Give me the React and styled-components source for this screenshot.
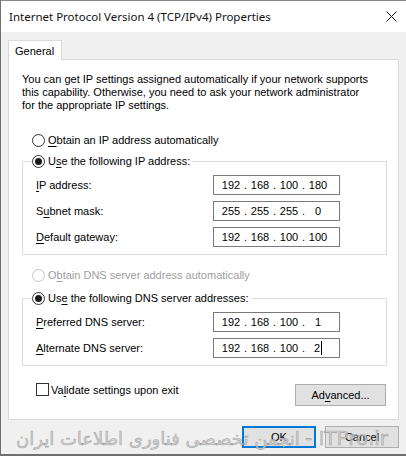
import React from 'react';
import styled, { createGlobalStyle } from 'styled-components';

const Global = createGlobalStyle`
  html, body { margin: 0; padding: 0; background: #f0f0f0; }
  body {
    font-family: "Liberation Sans", Arial, sans-serif;
    font-size: 11px;
    color: #000;
  }
  * { box-sizing: border-box; }
`;

const Window = styled.div`
  position: relative;
  width: 406px;
  height: 456px;
  border-left: 1px solid #6f6f6f;
  border-top: 1px solid #8a8a8a;
  border-bottom: 2px solid #6f6f6f;
  display: flex;
  flex-direction: column;
  background: #f0f0f0;
  overflow: hidden;
`;

const TitleBar = styled.div`
  height: 31px;
  flex-shrink: 0;
  background: #fff;
  display: flex;
  align-items: center;
  justify-content: space-between;
  padding: 0 9px 0 8px;
`;

const Title = styled.span`
  font-family: "Noto Sans", "Open Sans", sans-serif;
  font-size: 11.5px;
  white-space: nowrap;
  color: #111;
`;

const Body = styled.div`
  flex: 1;
  display: flex;
  flex-direction: column;
  padding: 8px 7px 0 7px;
`;

const TabStrip = styled.div`
  display: flex;
`;

const Tab = styled.div`
  height: 20px;
  width: 54px;
  background: #fff;
  border: 1px solid #d9d9d9;
  border-bottom: none;
  margin-bottom: -1px;
  padding-left: 6px;
  display: flex;
  align-items: center;
  position: relative;
  z-index: 1;
`;

const Panel = styled.div`
  height: 361px;
  background: #fff;
  border: 1px solid #d9d9d9;
  display: flex;
  flex-direction: column;
`;

const Intro = styled.p`
  margin: 13px 0 0 13px;
  line-height: 13px;
  white-space: nowrap;
`;

const RadioRow = styled.label`
  display: flex;
  align-items: center;
  height: 16px;
  margin: ${p => p.$mt || 0}px 0 0 23px;
  color: ${p => (p.$disabled ? '#a0a0a0' : '#000')};
  white-space: nowrap;
`;

const Circle = styled.span`
  width: 13px;
  height: 13px;
  border-radius: 50%;
  border: 1px solid ${p => (p.$disabled ? '#c4c4c4' : '#333')};
  background: #fff;
  display: flex;
  align-items: center;
  justify-content: center;
  margin-right: 3px;
  flex-shrink: 0;
  &::after {
    content: '';
    display: ${p => (p.$checked ? 'block' : 'none')};
    width: 7px;
    height: 7px;
    border-radius: 50%;
    background: #1a1a1a;
  }
`;

const Key = styled.u`
  text-decoration: underline;
  text-underline-offset: 2px;
`;

const Group = styled.fieldset`
  margin: ${p => p.$mt}px 11px 0 13px;
  padding: 0;
  border: 1px solid #dcdcdc;
  min-width: 0;
`;

const Legend = styled.legend`
  margin-left: 8px;
  padding: 0 2px 0 1px;
  height: 16px;
  display: flex;
  align-items: center;
  white-space: nowrap;
`;

const Rows = styled.div`
  display: flex;
  flex-direction: column;
  gap: 6px;
  padding: 6px 0 7px 13px;
`;

const FieldRow = styled.div`
  display: grid;
  grid-template-columns: 177px 127px;
  align-items: center;
  height: 20px;
`;

const IpBox = styled.div`
  width: 127px;
  height: 20px;
  border: 1px solid #7a7a7a;
  background: #fff;
  display: flex;
  align-items: center;
  padding-left: 6px;
`;

const Octet = styled.span`
  width: 22px;
  display: flex;
  justify-content: center;
  align-items: center;
`;

const Dot = styled.span`
  width: 7px;
  text-align: center;
`;

const Caret = styled.span`
  display: inline-block;
  width: 1px;
  height: 14px;
  background: #000;
  margin-left: 1px;
`;

const BottomRow = styled.div`
  display: flex;
  justify-content: space-between;
  align-items: flex-start;
  margin: 18px 12px 0 27px;
`;

const CheckLabel = styled.label`
  display: flex;
  align-items: center;
  margin-top: -1px;
  white-space: nowrap;
`;

const Box = styled.span`
  width: 13px;
  height: 13px;
  border: 1px solid #333;
  background: #fff;
  margin-right: 2px;
`;

const Button = styled.div`
  width: ${p => p.$w}px;
  height: 22px;
  background: #e1e1e1;
  border: ${p => (p.$default ? '2px solid #0078d7' : '1px solid #adadad')};
  display: flex;
  align-items: center;
  justify-content: center;
  white-space: nowrap;
`;

const Buttons = styled.div`
  display: flex;
  justify-content: flex-end;
  gap: 9px;
  margin-top: 6px;
`;

const Watermark = styled.div`
  position: absolute;
  left: 15px;
  top: 424px;
  height: 26px;
  display: flex;
  align-items: center;
  gap: 5px;
  white-space: nowrap;
  pointer-events: none;
  color: rgba(205, 205, 205, 0.85);
  -webkit-text-stroke: 0.6px rgba(120, 120, 120, 0.55);
`;

const WmFa = styled.span`
  font-family: "DejaVu Sans", sans-serif;
  font-size: 18px;
  direction: rtl;
  unicode-bidi: isolate;
`;

const WmEn = styled.span`
  font-family: "DejaVu Sans", sans-serif;
  font-size: 20px;
`;

const Ip = ({ parts, caret }) => (
  <IpBox>
    {parts.map((p, i) => (
      <React.Fragment key={i}>
        {i > 0 && <Dot>.</Dot>}
        <Octet>
          {p}
          {caret && i === 3 && <Caret />}
        </Octet>
      </React.Fragment>
    ))}
  </IpBox>
);

const CloseIcon = () => (
  <svg width="11" height="11" viewBox="0 0 11 11">
    <path d="M0.5 0.5 L10.5 10.5 M10.5 0.5 L0.5 10.5" stroke="#111" strokeWidth="1" fill="none" />
  </svg>
);

export default function App() {
  return (
    <>
      <Global />
      <Window>
        <TitleBar>
          <Title>Internet Protocol Version 4 (TCP/IPv4) Properties</Title>
          <CloseIcon />
        </TitleBar>
        <Body>
          <TabStrip>
            <Tab>General</Tab>
          </TabStrip>
          <Panel>
            <Intro>
              You can get IP settings assigned automatically if your network supports<br />
              this capability. Otherwise, you need to ask your network administrator<br />
              for the appropriate IP settings.
            </Intro>
            <RadioRow $mt={20}>
              <Circle />
              <span><Key>O</Key>btain an IP address automatically</span>
            </RadioRow>
            <Group $mt={5}>
              <Legend>
                <Circle $checked />
                <span>U<Key>s</Key>e the following IP address:</span>
              </Legend>
              <Rows>
                <FieldRow>
                  <span><Key>I</Key>P address:</span>
                  <Ip parts={['192', '168', '100', '180']} />
                </FieldRow>
                <FieldRow>
                  <span>S<Key>u</Key>bnet mask:</span>
                  <Ip parts={['255', '255', '255', '0']} />
                </FieldRow>
                <FieldRow>
                  <span><Key>D</Key>efault gateway:</span>
                  <Ip parts={['192', '168', '100', '100']} />
                </FieldRow>
              </Rows>
            </Group>
            <RadioRow $mt={12} $disabled>
              <Circle $disabled />
              <span>O<Key>b</Key>tain DNS server address automatically</span>
            </RadioRow>
            <Group $mt={7}>
              <Legend>
                <Circle $checked />
                <span>Us<Key>e</Key> the following DNS server addresses:</span>
              </Legend>
              <Rows>
                <FieldRow>
                  <span><Key>P</Key>referred DNS server:</span>
                  <Ip parts={['192', '168', '100', '1']} />
                </FieldRow>
                <FieldRow>
                  <span><Key>A</Key>lternate DNS server:</span>
                  <Ip parts={['192', '168', '100', '2']} caret />
                </FieldRow>
              </Rows>
            </Group>
            <BottomRow>
              <CheckLabel>
                <Box />
                <span>Va<Key>l</Key>idate settings upon exit</span>
              </CheckLabel>
              <Button $w={91}>Ad<Key>v</Key>anced...</Button>
            </BottomRow>
          </Panel>
          <Buttons>
            <Button $w={74} $default>OK</Button>
            <Button $w={74}>Cancel</Button>
          </Buttons>
        </Body>
        <Watermark>
          <WmFa>انجمن تخصصی فناوری اطلاعات ایران</WmFa>
          <WmEn>- ITPro.ir</WmEn>
        </Watermark>
      </Window>
    </>
  );
}
